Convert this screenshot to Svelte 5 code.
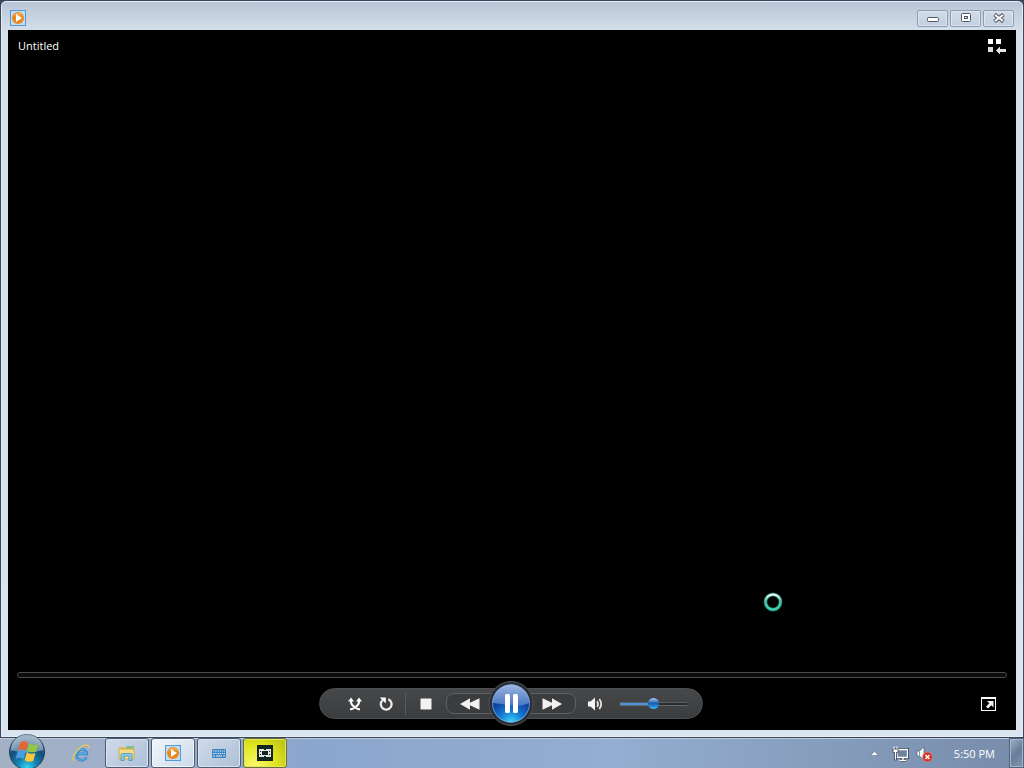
<script lang="ts">
  let seek = $state(0);
  let volume = $state(50);
  let playing = $state(true);
</script>

<svelte:head>
  <title>Untitled</title>
</svelte:head>

{#snippet playerIcon()}
  <svg width="16" height="16" viewBox="0 0 16 16" aria-hidden="true">
    <rect x=".5" y=".5" width="15" height="15" fill="#c3dcf0" stroke="#4f9bd8" />
    <circle cx="8" cy="8" r="6" fill="#e9871f" />
    <path d="M3 6a5.5 5.5 0 0 1 10 0q-5-2-10 0z" fill="#f2a850" />
    <path d="M6 4v8l6-4z" fill="#fff" />
  </svg>
{/snippet}

<div class="desktop">
  <main class="window">
    <header class="titlebar">
      {@render playerIcon()}
      <div class="window-buttons">
        <button aria-label="Minimize">
          <svg width="12" height="10" viewBox="0 0 12 10">
            <rect x=".5" y="4.5" width="11" height="4" rx="1" fill="#fff" stroke="#535666" />
          </svg>
        </button>
        <button aria-label="Maximize">
          <svg width="12" height="10" viewBox="0 0 12 10">
            <rect x="1.500" y=".5" width="9" height="8" rx="1" fill="#fff" stroke="#535666" />
            <rect x="4.500" y="3.500" width="3" height="2" fill="#d3dce8" stroke="#535666" />
          </svg>
        </button>
        <button aria-label="Close">
          <svg width="12" height="10" viewBox="0 0 12 10">
            <path d="M1.500 1.500l9 7m0-7l-9 7" stroke="#535666" stroke-width="4" />
            <path d="M2 2l8 6m0-6l-8 6" stroke="#fff" stroke-width="2" />
          </svg>
        </button>
      </div>
    </header>

    <section class="player">
      <div class="now-playing">
        <span>Untitled</span>
        <button class="plain" aria-label="Switch to Library">
          <svg width="18" height="15" viewBox="0 0 18 15">
            <path d="M0 0h5v5H0zM8 0h5v5H8z" fill="#fff" />
            <path d="M0 8h5v5H0z" fill="#ddd" />
            <path d="M8 11.500 12 7.500v2.500h6v3h-6v2.500z" fill="#e6e6e6" />
          </svg>
        </button>
      </div>

      <div class="video"></div>

      <input class="seek" type="range" aria-label="Seek" bind:value={seek} />

      <div class="controls">
        <div class="pill">
          <button class="tool" aria-label="Shuffle">
            <svg width="14" height="14" viewBox="0 0 14 14" fill="none" stroke="#fff" stroke-width="2">
              <path d="M3 3v2q0 2.500 3.500 5 2.500 2 5.500 2.500M11 3v2q0 2.500-3.500 5-2.500 2-5.500 2.500" />
              <path d="M0 4.500 3 .5l3 4zM8 4.500l3-4 3 4z" fill="#fff" stroke="none" />
            </svg>
          </button>
          <button class="tool" aria-label="Repeat">
            <svg width="14" height="14" viewBox="0 0 14 14">
              <path d="M9.300 2.200a5.400 5.400 0 1 1-5.800 1" fill="none" stroke="#eee" stroke-width="2.200" />
              <path d="M.8.5h6v6z" fill="#fff" />
            </svg>
          </button>
          <span class="divider"></span>
          <button class="tool" aria-label="Stop">
            <svg width="12" height="12" viewBox="0 0 12 12">
              <rect width="11" height="11" x=".5" y=".5" rx=".5" fill="#f2f2f2" />
            </svg>
          </button>
          <button class="skip previous" aria-label="Previous">
            <svg width="20" height="12" viewBox="0 0 20 12">
              <path d="M0 6 10 .3v4.500L19.500.3v11.400L10 7.200v4.500z" fill="#f0f0f0" />
            </svg>
          </button>
          <button class="pause" aria-label={playing ? "Pause" : "Play"} onclick={() => (playing = !playing)}>
            <svg width="46" height="46" viewBox="0 0 46 46">
              <defs>
                <linearGradient id="glass" x2="0" y2="1">
                  <stop offset="0" stop-color="#9db6e0" />
                  <stop offset="1" stop-color="#4775c4" />
                </linearGradient>
                <radialGradient id="glow" cx=".5" cy="1" r=".7">
                  <stop offset="0" stop-color="#3ed8ff" />
                  <stop offset=".45" stop-color="#1678d0" />
                  <stop offset="1" stop-color="#0b3592" />
                </radialGradient>
              </defs>
              <circle cx="23" cy="22.500" r="22" fill="#2b3037" stroke="#4d5157" />
              <circle cx="23" cy="22.500" r="19" fill="url(#glow)" />
              <path d="M4.500 22a18.500 18.500 0 0 1 37 0q-9 4-18.500 2.500T4.500 22z" fill="url(#glass)" />
              <circle cx="23" cy="22.500" r="18.500" fill="none" stroke="#a7c2e9" stroke-opacity=".6" />
              {#if playing}
                <rect x="17" y="13" width="5" height="19" rx="1.500" fill="#fff" />
                <rect x="25" y="13" width="5" height="19" rx="1.500" fill="#fff" />
              {:else}
                <path d="M18 13v20l15-10z" fill="#fff" />
              {/if}
            </svg>
          </button>
          <button class="skip next" aria-label="Next">
            <svg width="20" height="12" viewBox="0 0 20 12">
              <path d="M20 6 10 .3v4.500L.5.3v11.400L10 7.200v4.500z" fill="#f0f0f0" />
            </svg>
          </button>
          <button class="tool" aria-label="Mute">
            <svg width="15" height="14" viewBox="0 0 15 14">
              <path d="M0 4.500h2.500L7 .5v13L2.500 9.500H0z" fill="#f4f4f4" />
              <path d="M9 4.200q2 2.800 0 5.600M11.300 2q3.800 5 0 10" fill="none" stroke="#e4e4e4" stroke-width="1.800" />
            </svg>
          </button>
          <input
            class="volume"
            type="range"
            aria-label="Volume"
            bind:value={volume}
            style="--level: {volume}%"
          />
        </div>
        <button class="plain fullscreen" aria-label="View full screen">
          <svg width="16" height="14" viewBox="0 0 16 14">
            <path d="M0 0h15v14H0zM1 2v11h13V2z" fill="#fff" fill-rule="evenodd" />
            <path d="M6 4h6.500v6.500l-2.200-2.200-3.300 3.300L5 9.800 8.300 6.300z" fill="#f2f2f2" />
          </svg>
        </button>
      </div>
    </section>

    <svg class="busy" width="20" height="20" viewBox="0 0 20 20" aria-hidden="true">
      <defs>
        <linearGradient id="ring" x2="0" y2="1">
          <stop offset="0" stop-color="#e8fffa" />
          <stop offset=".45" stop-color="#4fb9a3" />
          <stop offset="1" stop-color="#3ccfae" />
        </linearGradient>
      </defs>
      <circle cx="10" cy="10" r="7.500" fill="none" stroke="#12584e" stroke-width="4" />
      <circle cx="10" cy="10" r="7.500" fill="none" stroke="url(#ring)" stroke-width="2.600" />
    </svg>
  </main>

  <footer class="taskbar">
    <div class="start-slot">
      <button class="start" aria-label="Start">
        <svg width="38" height="38" viewBox="0 0 38 38">
          <defs>
            <radialGradient id="orb" cx=".5" cy=".95" r=".85">
              <stop offset="0" stop-color="#31d7f5" />
              <stop offset=".35" stop-color="#177fae" />
              <stop offset=".7" stop-color="#164d79" />
              <stop offset="1" stop-color="#718fa7" />
            </radialGradient>
          </defs>
          <circle cx="19" cy="19" r="17.500" fill="url(#orb)" stroke="#1d3e5b" />
          <path d="M3 17a16 16 0 0 1 32 0q-16 5-32 0z" fill="#d7e5ec" fill-opacity=".45" />
          <path d="M12.500 9.500q4-2.500 7.500.3L18 17.500q-4-2.500-8 .2z" fill="#ec6330" />
          <path d="M21 10.500q4.500 2.700 9.500.5l-2.500 7.500q-4.500 2-9-.7z" fill="#91c744" />
          <path d="M9.500 18.900q4-2.600 8.200-.2L15.500 26q-4-2.500-8 0z" fill="#4b9de0" />
          <path d="M18.800 19.200q4.500 2.600 8.700.7L25.300 28q-4.500 2-8.700-.8z" fill="#fbc83b" />
        </svg>
      </button>
    </div>
    <nav aria-label="Taskbar">
      <button class="pinned" aria-label="Internet Explorer">
        <svg width="18" height="18" viewBox="0 0 20 20" fill="none">
          <path d="M16 14.500A6 6 0 1 1 16.500 11H6" stroke="#2f86c6" stroke-width="3" />
          <path d="M15.500 14.500A6 6 0 1 1 16 11H6" stroke="#73c5f0" />
          <path d="M3.500 18.500Q-.5 18 3 11 8 3 15 1.200q4-.8 3.300 3.300" stroke="#e2c75c" stroke-width="1.800" />
        </svg>
      </button>
      <button class="task" aria-label="Windows Explorer">
        <svg width="18" height="18" viewBox="0 0 18 18">
          <path d="M1 3h5l1 1h9v11H1z" fill="#e0bd57" />
          <path d="M8 2h8v4H8z" fill="#82c183" />
          <path d="M1 5h15v10H1z" fill="#f3dd89" stroke="#cfae4c" />
          <path d="M3 16.500V11q0-1.500 1.500-1.500h8Q14 9.500 14 11v5.500h-3V12H6v4.500z" fill="#8fcbe4" stroke="#3f93bf" stroke-width=".8" />
        </svg>
      </button>
      <button class="task active" aria-label="Windows Media Player">
        {@render playerIcon()}
      </button>
      <button class="task" aria-label="On-Screen Keyboard">
        <svg width="14" height="9" viewBox="0 0 14 9">
          <rect width="14" height="9" rx="1" fill="#3b83bd" />
          <path d="M1 2h12M1 4.500h12" stroke="#e0f0fa" stroke-dasharray="1.400 .8" />
          <path d="M1 7h2M4 7h6M11 7h2" stroke="#e0f0fa" />
        </svg>
      </button>
      <button class="task alert" aria-label="Video Recorder">
        <svg width="16" height="16" viewBox="0 0 16 16">
          <rect width="16" height="16" fill="#132520" />
          <path d="M2 4h12v8H2z" fill="#e4e7df" />
          <path d="M5 6h6v4H5z" fill="#132520" />
          <path d="M3 6h1v1H3zM3 9h1v1H3zM12 6h1v1h-1zM12 9h1v1h-1zM7 4h2v1H7zM7 11h2v1H7z" fill="#132520" />
        </svg>
      </button>
    </nav>
    <div class="tray">
      <button class="plain" aria-label="Show hidden icons">
        <svg width="9" height="5" viewBox="0 0 9 5">
          <path d="M.5 4.500 4.500.5l4 4z" fill="#fff" stroke="#4b5970" stroke-width=".5" />
        </svg>
      </button>
      <div class="status">
        <button class="plain" aria-label="Network">
          <svg width="17" height="16" viewBox="0 0 17 16">
            <path d="M5 3.500h10.500v8H5zM8 14.500h6M11 12v2" fill="#71839c" stroke="#2f3a48" stroke-width="3" />
            <path d="M5 3.500h10.500v8H5zM7.500 14.500h6.500M11 12v2" fill="#71839c" stroke="#fff" stroke-width="1.300" />
            <path d="M1 3h5v3.500H4.500V14h-2V6.500H1z" fill="#fff" stroke="#34404f" stroke-width=".8" />
            <path d="M2 .5V3M5 .5V3" stroke="#fff" />
          </svg>
        </button>
        <button class="plain" aria-label="Volume muted">
          <svg width="17" height="16" viewBox="0 0 17 16">
            <path d="M1 5h2.500L8 .8v13.400L3.500 10H1z" fill="#fff" stroke="#4b5970" stroke-width=".7" />
            <path d="M3.500 5v5" stroke="#8796ab" />
            <circle cx="11.500" cy="11" r="4.900" fill="#cf3427" stroke="#e88279" stroke-width=".7" />
            <path d="m9.500 9 4 4m0-4-4 4" stroke="#fff" stroke-width="1.500" />
          </svg>
        </button>
      </div>
      <time datetime="17:50">5:50 PM</time>
      <button class="show-desktop" aria-label="Show desktop"></button>
    </div>
  </footer>
</div>

<style>
  :global(body) {
    margin: 0;
    background: #3c465a;
  }

  .desktop {
    display: flex;
    flex-direction: column;
    min-height: 100vh;
    font: 11px/16px "Open Sans", "Noto Sans", sans-serif;
  }

  button {
    display: flex;
    align-items: center;
    justify-content: center;
    box-sizing: border-box;
    margin: 0;
    padding: 0;
    border: 0;
    background: none;
  }

  svg {
    display: block;
    flex: none;
  }

  .window {
    position: relative;
    flex: 1;
    display: flex;
    flex-direction: column;
    box-sizing: border-box;
    padding: 0 7px 7px;
    border: 1px solid #39465a;
    border-radius: 6px 6px 0 0;
    background: linear-gradient(#b9c5d5, #d5dfeb 30px, #dae4ee);
    box-shadow: inset 0 0 0 1px #e6eef6;
  }

  .titlebar {
    display: flex;
    align-items: center;
    justify-content: space-between;
    height: 24px;
    padding: 5px 2px 0;
  }

  .window-buttons {
    display: flex;
    gap: 2px;
  }

  .window-buttons button {
    width: 31px;
    height: 17px;
    border: 1px solid #8f9db2;
    border-radius: 2px;
    background: linear-gradient(#d3dce8, #c2cfde);
    box-shadow: inset 0 0 0 1px #dde6f0;
  }

  .player {
    flex: 1;
    display: flex;
    flex-direction: column;
    padding: 8px 9px 11px;
    background: #000;
  }

  .now-playing {
    display: flex;
    align-items: center;
    justify-content: space-between;
    padding: 0 1px;
    color: #fff;
  }

  .video {
    flex: 1;
  }

  input {
    appearance: none;
    box-sizing: border-box;
    margin: 0;
    background: none;
  }

  .seek {
    width: 100%;
    height: 6px;
    margin-bottom: 10px;
    border: 1px solid #4b4b4b;
    border-radius: 3px;
    background: #0c0c0c;
  }

  .seek::-webkit-slider-thumb {
    appearance: none;
    width: 0;
    height: 0;
  }

  .controls {
    display: grid;
    grid-template-columns: 1fr auto 1fr;
    align-items: center;
    padding-right: 2px;
  }

  .pill {
    grid-column: 2;
    display: flex;
    align-items: center;
    box-sizing: border-box;
    height: 31px;
    padding: 0 15px 0 19px;
    border: 1px solid #4d4f51;
    border-radius: 16px;
    background: linear-gradient(#46484a, #3a3c3e);
  }

  .tool {
    width: 31px;
    height: 24px;
  }

  .divider {
    width: 1px;
    height: 22px;
    margin: 0 4px;
    background: #57595c;
  }

  .skip {
    width: 48px;
    height: 21px;
    border: 1px solid #5e6163;
    background: #3a3c3e;
  }

  .previous {
    margin-left: 5px;
    border-radius: 8px 0 0 8px;
  }

  .next {
    margin-right: 4px;
    border-radius: 0 8px 8px 0;
  }

  .pause {
    z-index: 1;
    height: 46px;
    margin: 0 -6px;
    border-radius: 50%;
  }

  .volume {
    width: 67px;
    height: 12px;
    margin-left: 9px;
  }

  .volume::-webkit-slider-runnable-track {
    height: 4px;
    border-top: 1px solid #5c6064;
    border-bottom: 1px solid #66696c;
    background: linear-gradient(90deg, #4c92dc var(--level), #292b2d var(--level)) border-box;
  }

  .volume::-webkit-slider-thumb {
    appearance: none;
    width: 11px;
    height: 11px;
    margin-top: -5px;
    border-radius: 50%;
    background: linear-gradient(#b6d0f1, #1659ae 48%, #38b9f5);
  }

  .fullscreen {
    justify-self: end;
    margin-right: 8px;
  }

  /* busy pointer */
  .busy {
    position: absolute;
    top: 591px;
    left: 762px;
  }

  .taskbar {
    display: flex;
    height: 30px;
    background: linear-gradient(90deg, #a4b0c3, #9eafcb 12%, #8ba6cd 30%, #94add0 60%, #8399b9 85%, #778caa);
    box-shadow: inset 0 1px #c0cddd;
  }

  .start-slot {
    position: relative;
    width: 59px;
  }

  .start {
    position: absolute;
    top: -5px;
    left: 8px;
  }

  nav {
    display: flex;
    flex: 1;
    gap: 2px;
  }

  .pinned,
  .task {
    width: 44px;
    height: 30px;
  }

  .task {
    border: 1px solid #4c5c74;
    border-radius: 3px;
    background: linear-gradient(135deg, #d0dbe9, #aebfd6);
    box-shadow: inset 0 0 0 1px #d9e4f0;
  }

  .active {
    background: linear-gradient(135deg, #f3f7fb, #cbd8e8);
    box-shadow: inset 0 0 0 1px #f4f8fc;
  }

  .alert {
    border-color: #667037;
    background: radial-gradient(circle at 25% 100%, #fdfb72, #e2e620 50%, #b4bd10);
    box-shadow: inset 0 0 0 1px #e4e75d;
  }

  .tray {
    display: flex;
    align-items: center;
    color: #fff;
  }

  .status {
    display: flex;
    gap: 7px;
    padding: 2px 21px 0 13px;
  }

  .tray time {
    margin-right: 14px;
    padding-top: 1px;
  }

  .show-desktop {
    align-self: stretch;
    width: 15px;
    border: 1px solid #536580;
    background: linear-gradient(135deg, #9eb0c7, #677d98 50%, #8298b0);
    box-shadow: inset 0 0 0 1px #a6b5c8;
  }
</style>
